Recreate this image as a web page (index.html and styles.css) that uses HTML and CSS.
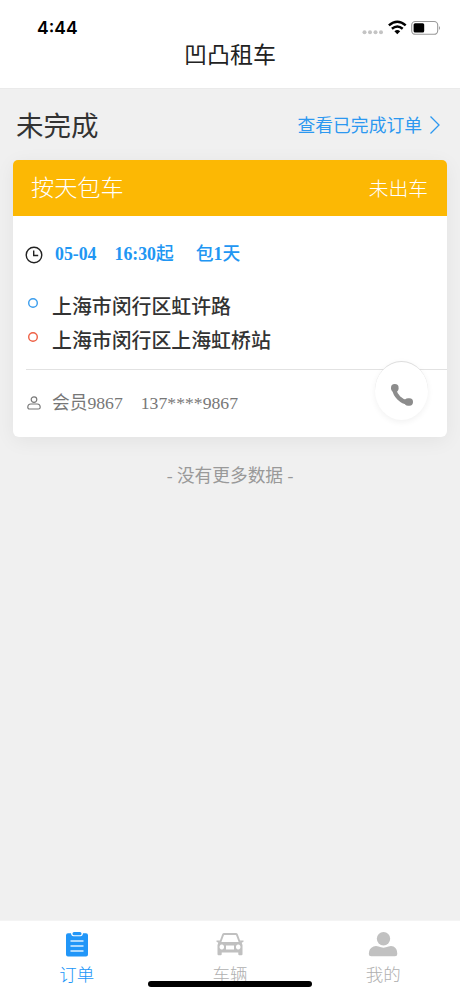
FILE: index.html
```html
<!DOCTYPE html>
<html lang="zh-CN">
<head>
<meta charset="utf-8">
<title>凹凸租车</title>
<link rel="stylesheet" href="styles.css">
</head>
<body>
<div class="app">
  <header class="header">
    <div class="status">
      <span class="clock">4:44</span>
      <svg class="status-icons" width="80" height="20" viewBox="0 0 80 20">
        <g fill="#c4c4c4"><circle cx="4.5" cy="14.300" r="2"/><circle cx="10" cy="14.300" r="2"/><circle cx="15.500" cy="14.300" r="2"/><circle cx="21" cy="14.300" r="2"/></g>
        <g fill="none" stroke="#000" stroke-width="2.500"><path d="M28.900 7.400q8.400-7.200 16.800 0"/><path d="M31.900 10.700q5.400-4.500 10.800 0"/></g>
        <path d="M34.400 13.200q2.900-2.300 5.800 0l-2.900 3z"/>
        <rect x="51.700" y="3.500" width="26" height="12.800" rx="3.600" fill="none" stroke="#999" stroke-width="1.100"/>
        <rect x="53.600" y="5.300" width="10.600" height="9.200" rx="1.500"/>
        <path d="M79 8q2 2 0 4z" fill="#999"/>
      </svg>
    </div>
    <h1 class="title">凹凸租车</h1>
  </header>
  <main class="main">
    <div class="section-head">
      <h2>未完成</h2>
      <a class="more"><span>查看已完成订单</span><svg width="12" height="20" viewBox="0 0 12 20" fill="none" stroke="#2c98f0" stroke-width="1.300"><path d="M1.500 1.500L10 10l-8.500 8.500"/></svg></a>
    </div>
    <article class="card">
      <div class="card-head"><span class="kind">按天包车</span><span class="state">未出车</span></div>
      <div class="card-body">
        <div class="when">
          <svg width="18" height="18" viewBox="0 0 18 18" fill="none" stroke="#222" stroke-width="1.400"><circle cx="9" cy="9" r="7.800"/><path d="M8.700 4.500v5h4.500"/></svg>
          <span class="date">05-04</span><span class="time">16:30<b>起</b></span><span><b>包</b>1<b>天</b></span>
        </div>
        <div class="place"><svg width="12" height="12" viewBox="0 0 12 12"><circle cx="6" cy="6" r="4.300" fill="none" stroke="#3b9ded" stroke-width="1.400"/></svg><span>上海市闵行区虹许路</span></div>
        <div class="place"><svg width="12" height="12" viewBox="0 0 12 12"><circle cx="6" cy="6" r="4.300" fill="none" stroke="#ee6045" stroke-width="1.400"/></svg><span>上海市闵行区上海虹桥站</span></div>
      </div>
      <div class="contact">
        <svg width="14" height="14" viewBox="0 0 14 14" fill="none" stroke="#777" stroke-width="1.200"><circle cx="7" cy="3.600" r="2.800"/><path d="M3.800 8h6.400q3 0 3 3.200 0 1.800-1.800 1.800H2.600Q.8 13 .8 11.200.8 8 3.800 8z"/></svg>
        <span class="member">会员9867</span><span class="phone">137****9867</span>
        <div class="call"><svg width="24" height="24" viewBox="0 0 24 24"><path d="M4.200 6C5 12.500 11 18.800 18.500 19.700" fill="none" stroke="#8c8c8c" stroke-width="4.200"/><g fill="#8c8c8c"><rect x="1" y="1" width="7.600" height="8" rx="3.700"/><rect x="14.500" y="15.200" width="8.500" height="7.500" rx="3.600"/></g></svg></div>
      </div>
    </article>
    <p class="end">- 没有更多数据 -</p>
  </main>
  <nav class="tabs">
    <div class="tab active">
      <svg width="28" height="26" viewBox="0 0 28 26"><path d="M5 2.300h3q.3 3 2.500 3h7q2.200 0 2.500-3h3a2 2 0 0 1 2 2v19.200a2 2 0 0 1-2 2H5a2 2 0 0 1-2-2V4.300a2 2 0 0 1 2-2z" fill="#2196f8"/><rect x="9.500" y="1" width="9" height="3.200" rx="1.500" fill="#2196f8"/><path d="M7.500 10h13M7.500 15h13M7.500 20h13" stroke="#d9efff" stroke-width="1.400"/></svg>
      <span>订单</span>
    </div>
    <div class="tab">
      <svg width="28" height="26" viewBox="0 0 28 26"><path d="M4 12L7 3.800Q7.300 3 8.300 3h11.400q1 0 1.300.8L24 12" fill="none" stroke="#c0c0c0" stroke-width="1.900"/><path fill-rule="evenodd" d="M.5 9.500h3.700l-.5 1.500h20.600l-.5-1.500h3.700v1.300l-1.800 1 .8 2.200V23.300a1 1 0 0 1-1 1h-2.200a1 1 0 0 1-1-1V21.500H5.700v1.800a1 1 0 0 1-1 1H2.500a1 1 0 0 1-1-1V14l.8-2.200-1.800-1zM5.800 13.500a2.300 2.500 0 1 0 .01 0zM22.200 13.500a2.300 2.500 0 1 0 .01 0zM10 14.500v4h8v-4z" fill="#c0c0c0"/></svg>
      <span>车辆</span>
    </div>
    <div class="tab">
      <svg width="30" height="26" viewBox="0 0 30 26" fill="#c1c1c1"><circle cx="15.500" cy="7.700" r="6.700"/><path d="M5.500 15.600Q8 14.600 10.500 15.600q5 2.200 10 0 2.500-1 5 0 3.800 1.800 3.800 7.400 0 2.200-2.300 2.200H3.200Q.8 25.200.8 23q0-5.600 4.700-7.400z"/></svg>
      <span>我的</span>
    </div>
    <div class="home-bar"></div>
  </nav>
</div>
</body>
</html>
```
FILE: styles.css
```css
* { box-sizing: border-box; }
body {
  margin: 0;
  background: #f0f0f0;
  color: #333;
  font-family: "Liberation Serif", "Noto Sans CJK SC", serif;
}
svg { display: block; flex: none; }
h1, h2, p { margin: 0; font-weight: 400; }
.app { display: flex; flex-direction: column; height: 996px; }
.header { height: 88px; background: #fff; }
.status {
  display: flex;
  justify-content: space-between;
  height: 38px;
  padding: 18px 20px 0 37px;
}
.clock { font: 600 17.500px/20px Inter, sans-serif; color: #000; }
.title { padding-top: 1px; font-size: 23px; line-height: 34px; text-align: center; color: #222; }
.main { flex: 1; padding: 0 13px; border-top: 1px solid #eaeaea; }
.section-head {
  display: flex;
  justify-content: space-between;
  align-items: center;
  height: 71px;
  padding: 3px 6px 0 3px;
}
.section-head h2 { margin-top: 1px; font-size: 27.500px; line-height: 40px; }
.more { display: flex; align-items: center; gap: 7px; font-size: 17.800px; line-height: 26px; color: #2c98f0; }
.more span { padding-bottom: 1px; }
.more svg { margin-bottom: 3px; }
.card { height: 277px; border-radius: 6px; background: #fff; box-shadow: 0 4px 20px rgba(0, 0, 0, .06); }
.card-head {
  display: flex;
  justify-content: space-between;
  align-items: center;
  height: 56px;
  padding: 0 19px 2px 18px;
  border-radius: 5px 5px 0 0;
  background: #fcb804;
  color: #fff;
  font-weight: 300;
}
.kind { padding-bottom: 2px; font-size: 23.200px; }
.state { font-size: 19.800px; }
.card-body {
  height: 154px;
  margin-left: 13px;
  padding-top: 24px;
  border-bottom: 1px solid #e2e2e2;
}
.when {
  display: flex;
  align-items: baseline;
  height: 29px;
  margin-bottom: 19px;
  font-size: 17.800px;
  font-weight: 700;
  line-height: 28px;
  color: #2196f3;
}
.when b { font-weight: 500; }
.when svg { align-self: center; margin: 0 0 0 -1px; }
.date { margin: 0 18px 0 12px; }
.time { margin-right: 22px; }
.place { display: flex; align-items: center; height: 34px; font-size: 19.900px; font-weight: 500; }
.place svg { margin: -4px 13px 0 1px; }
.contact {
  position: relative;
  display: flex;
  align-items: baseline;
  height: 67px;
  padding: 20px 0 0 14px;
  font-size: 17.700px;
  line-height: 26px;
  color: #777;
}
.contact > svg { align-self: flex-start; margin-top: 6px; }
.member { margin: 0 18px 0 11px; }
.call {
  position: absolute;
  top: -9px;
  right: 19px;
  display: flex;
  align-items: center;
  justify-content: center;
  width: 53px;
  height: 59px;
  padding-top: 7px;
  border-top: 1px solid #ddd;
  border-radius: 50%;
  background: #fff;
  box-shadow: 0 2px 6px rgba(0, 0, 0, .06);
}
.end { margin-top: 26px; font-size: 17.700px; line-height: 26px; text-align: center; color: #999; }
.tabs { position: relative; display: flex; height: 76px; background: #fff; border-top: 1px solid #f4f4f4; }
.tab {
  flex: 1;
  display: flex;
  flex-direction: column;
  align-items: center;
  padding-top: 10px;
  font-size: 17.500px;
  font-weight: 300;
  line-height: 26px;
  color: #b0b0b0;
}
.tab span { margin-top: 5px; }
.active { color: #2196f8; }
.home-bar { position: absolute; top: 60px; left: 148px; width: 164px; height: 6px; border-radius: 3px; background: #000; }
```
